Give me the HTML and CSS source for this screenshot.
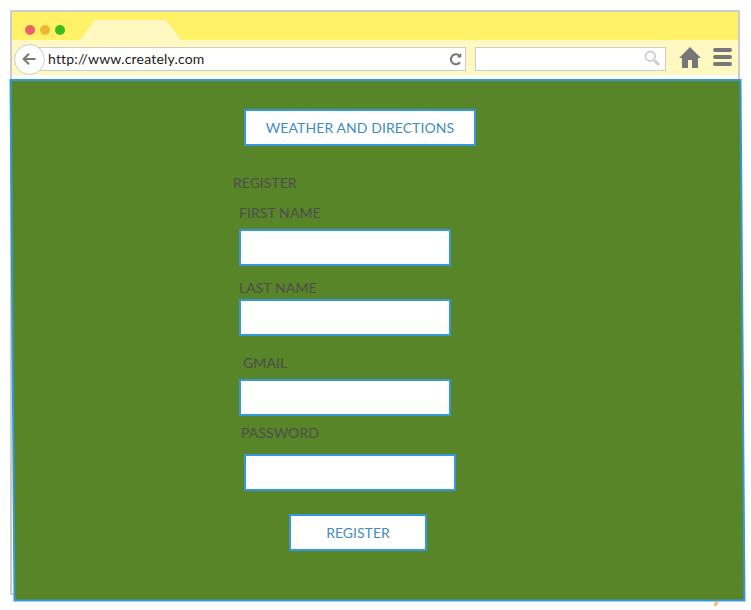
FILE: index.html
```html
<!DOCTYPE html>
<html lang="en">
<head>
<meta charset="utf-8">
<title>Weather and Directions</title>
<link rel="stylesheet" href="styles.css">
</head>
<body>
<div class="window">
  <header class="tabs">
    <i class="dot red"></i><i class="dot amber"></i><i class="dot green"></i>
    <svg class="tab" width="102" height="20" viewBox="0 0 102 20"><path d="M0 20L14.5 0H86L101 20Z"/></svg>
  </header>
  <nav class="toolbar">
    <div class="address">
      <span class="back"><svg width="14" height="12" viewBox="0 0 14 12"><path d="M7 .7L1.6 6L7 11.3M1.8 6H13.5"/></svg></span>
      <span class="url">http://www.creately.com</span>
      <svg class="reload" width="14" height="14" viewBox="0 0 14 14"><path class="arc" d="M10.3 3.6A5 5 0 1 0 11 10.2"/><path class="tip" d="M12.3 1V5.5H7.8Z"/></svg>
    </div>
    <div class="search"><svg width="17" height="17" viewBox="0 0 17 17"><circle cx="6.3" cy="6.3" r="4.8"/><path d="M10 10L11.5 11.5" class="neck"/><path d="M11 11L15 15"/></svg></div>
    <svg class="home" width="22" height="21" viewBox="0 0 22 21"><path d="M11 0L21.5 10.5V11H19V21H13V13H9V21H3V11H.5V10.5Z"/></svg>
    <svg class="menu" width="19" height="18" viewBox="0 0 19 18"><path d="M2 2H17M2 9H17M2 16H17"/></svg>
  </nav>
  <main class="page">
    <svg class="backdrop" width="738" height="523" viewBox="0 0 738 523"><path d="M1.5 1H731.5L735.5 521.5H5.5Z"/></svg>
    <form class="form">
      <button class="btn title" type="button">WEATHER AND DIRECTIONS</button>
      <h1 class="heading">REGISTER</h1>
      <label class="label first" for="first">FIRST NAME</label>
      <input class="field" id="first">
      <label class="label last" for="last">LAST NAME</label>
      <input class="field" id="last">
      <label class="label gmail" for="gmail">GMAIL</label>
      <input class="field" id="gmail">
      <label class="label password" for="password">PASSWORD</label>
      <input class="field secret" id="password" type="password">
      <button class="btn submit" type="button">REGISTER</button>
    </form>
  </main>
</div>
<svg class="mark" width="6" height="5" viewBox="0 0 6 5"><path d="M4.2 0L1.8 5"/></svg>
</body>
</html>
```
FILE: styles.css
```css
* { box-sizing: border-box; }
body {
  margin: 0;
  padding: 10px;
  height: 610px;
  overflow: hidden;
  position: relative;
  background: #fff;
  font: 14px/20px Lato, sans-serif;
}
svg { display: block; flex: none; }
.window { width: 730px; height: 585px; border: 2px solid #ccc; border-radius: 1px; }
.tabs { display: flex; align-items: center; height: 28px; padding: 7px 0 0 13px; background: #fff267; }
.dot { width: 10px; height: 10px; margin-right: 5px; border-radius: 50%; flex: none; }
.red { background: #ed5f6c; }
.amber { background: #ecb731; }
.green { background: #38bd1c; }
.tab { margin-left: 9.5px; fill: #fff8c0; align-self: flex-end; }
.toolbar { display: flex; height: 35px; padding: 7px 0 0 17px; background: #fff8c0; }
.address { display: flex; align-items: center; width: 437px; height: 24px; background: #fff; border: 1px solid #ccc; }
.back {
  display: flex; align-items: center; justify-content: center; flex: none;
  width: 31px; height: 31px; margin-left: -16.5px;
  background: #fff; border: 1px solid #ccc; border-radius: 50%;
}
.back svg { fill: none; stroke: #777; stroke-width: 2; }
.url { margin-left: 3.5px; color: #222; letter-spacing: .19px; }
.reload { margin-left: auto; margin-right: 2px; }
.arc { fill: none; stroke: #777; stroke-width: 2.1; }
.tip { fill: #777; }
.search { width: 191px; height: 24px; margin-left: 9px; padding: 2px 0 0 168px; background: #fff; border: 1px solid #ccc; }
.search svg { fill: none; stroke: #ccc; stroke-width: 3; }
.search circle, .search .neck { stroke-width: 1.8; }
.home { margin-left: 13px; fill: #777; }
.menu { margin: 1px 0 0 12px; stroke: #777; stroke-width: 4; stroke-linecap: round; }
.page { position: relative; margin-top: 4px; height: 523px; }
.backdrop { position: absolute; left: -3px; top: 0; fill: #588527; stroke: #3498db; stroke-width: 2; }
.form { position: relative; display: flex; flex-direction: column; align-items: flex-start; padding: 30px 0 0 221px; }
.btn, .field { height: 37px; padding: 0; background: #fff; border: 2px solid #3498db; border-radius: 0; font: inherit; flex: none; }
.btn { color: #3f8dc4; }
.field { width: 212px; margin-left: 6px; }
.secret { margin-left: 11px; }
.title { width: 232px; margin-left: 11px; letter-spacing: .08px; }
.submit { width: 138px; margin: 23px 0 0 56px; }
.heading, .label { margin: 0; font-size: 14px; font-weight: 400; color: #4d4d4d; }
.label { letter-spacing: .08px; }
.heading { margin-top: 27px; }
.first { margin: 10px 0 6px 6px; }
.last { margin: 12px 0 1px 6px; }
.gmail { margin: 17px 0 6px 10px; }
.password { margin: 7px 0 11px 8px; }
.mark { position: absolute; left: 713px; top: 601px; stroke: #fbb565; stroke-width: 3; }
```
